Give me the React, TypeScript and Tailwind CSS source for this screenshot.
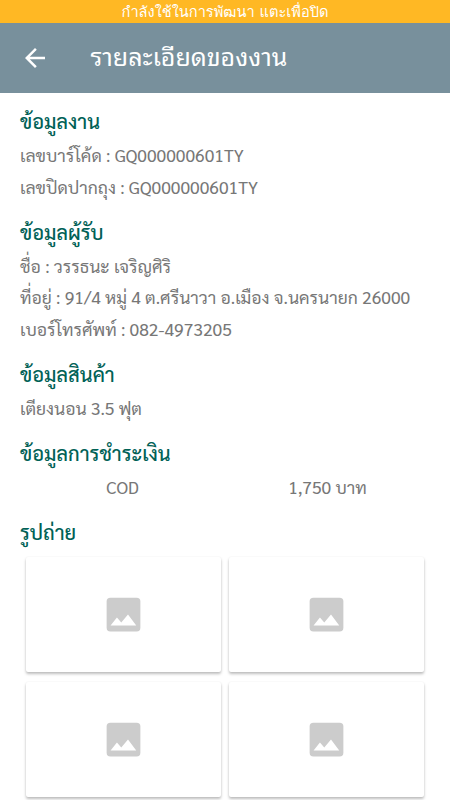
import React from 'react';

const sections = [
  { title: 'ข้อมูลงาน', lines: ['เลขบาร์โค้ด : GQ000000601TY', 'เลขปิดปากถุง : GQ000000601TY'] },
  {
    title: 'ข้อมูลผู้รับ',
    lines: [
      'ชื่อ : วรรธนะ เจริญศิริ',
      'ที่อยู่ : 91/4 หมู่ 4 ต.ศรีนาวา อ.เมือง จ.นครนายก 26000',
      'เบอร์โทรศัพท์ : 082-4973205',
    ],
  },
  { title: 'ข้อมูลสินค้า', lines: ['เตียงนอน 3.5 ฟุต'] },
];

function SectionTitle({ children }: { children: React.ReactNode }) {
  return <h2 className="h-[33px] whitespace-nowrap text-[20px] leading-[32px] font-medium text-[#006156]">{children}</h2>;
}

function PhotoCard() {
  return (
    <div className="flex h-[115px] w-[195px] items-center justify-center rounded-xs bg-white shadow-[0_2px_3px_rgba(0,0,0,0.26),0_0_2px_rgba(0,0,0,0.06)]">
      <svg className="h-[45px] w-[45px]" viewBox="0 0 24 24">
        <rect x="3" y="3" width="18" height="18" rx="2" fill="#cccccc" />
        <path d="M5.100 17.900L8.500 13.600 10.800 16.300 14.400 12 18.800 17.900z" fill="white" />
      </svg>
    </div>
  );
}

export default function App() {
  return (
    <div className="flex h-[800px] w-[450px] flex-col overflow-hidden bg-white font-['Sarabun','Noto_Sans_CJK_JP',sans-serif]">
      <div className="flex h-[23px] shrink-0 items-center justify-center bg-[#ffb824] font-[Loma,serif] text-[14.600px] leading-[20px] text-white">
        กำลังใช้ในการพัฒนา แตะเพื่อปิด
      </div>
      <header className="flex h-[70px] shrink-0 items-center bg-[#78909c] pl-[20px] text-white">
        <svg className="h-[30px] w-[30px]" viewBox="0 0 24 24" fill="currentColor">
          <path d="M20 11H7.830l5.590-5.590L12 4l-8 8 8 8 1.410-1.410L7.830 13H20v-2z" />
        </svg>
        <h1 className="ml-[40.500px] whitespace-nowrap pb-[4px] font-['Noto_Sans_Thai_Looped',serif] text-[25px]">รายละเอียดของงาน</h1>
      </header>
      <main className="flex flex-col px-[20px] pt-[12px]">
        {sections.map((section) => (
          <section key={section.title} className="mb-[14px]">
            <SectionTitle>{section.title}</SectionTitle>
            {section.lines.map((line) => (
              <p key={line} className="h-[31.8px] whitespace-nowrap text-[17.5px] leading-[33px] text-[#777777]">
                {line}
              </p>
            ))}
          </section>
        ))}
        <section className="mb-[14px]">
          <SectionTitle>ข้อมูลการชำระเงิน</SectionTitle>
          <div className="grid h-[31.8px] grid-cols-2 text-center text-[17.5px] leading-[33px] text-[#777777]">
            <span>COD</span>
            <span>1,750 บาท</span>
          </div>
        </section>
        <section>
          <SectionTitle>รูปถ่าย</SectionTitle>
          <div className="mt-[8.6px] grid grid-cols-[195px_195px] gap-x-[8px] gap-y-[10px] pl-[6px]">
            {[1, 2, 3, 4].map((id) => (
              <PhotoCard key={id} />
            ))}
          </div>
        </section>
      </main>
    </div>
  );
}
